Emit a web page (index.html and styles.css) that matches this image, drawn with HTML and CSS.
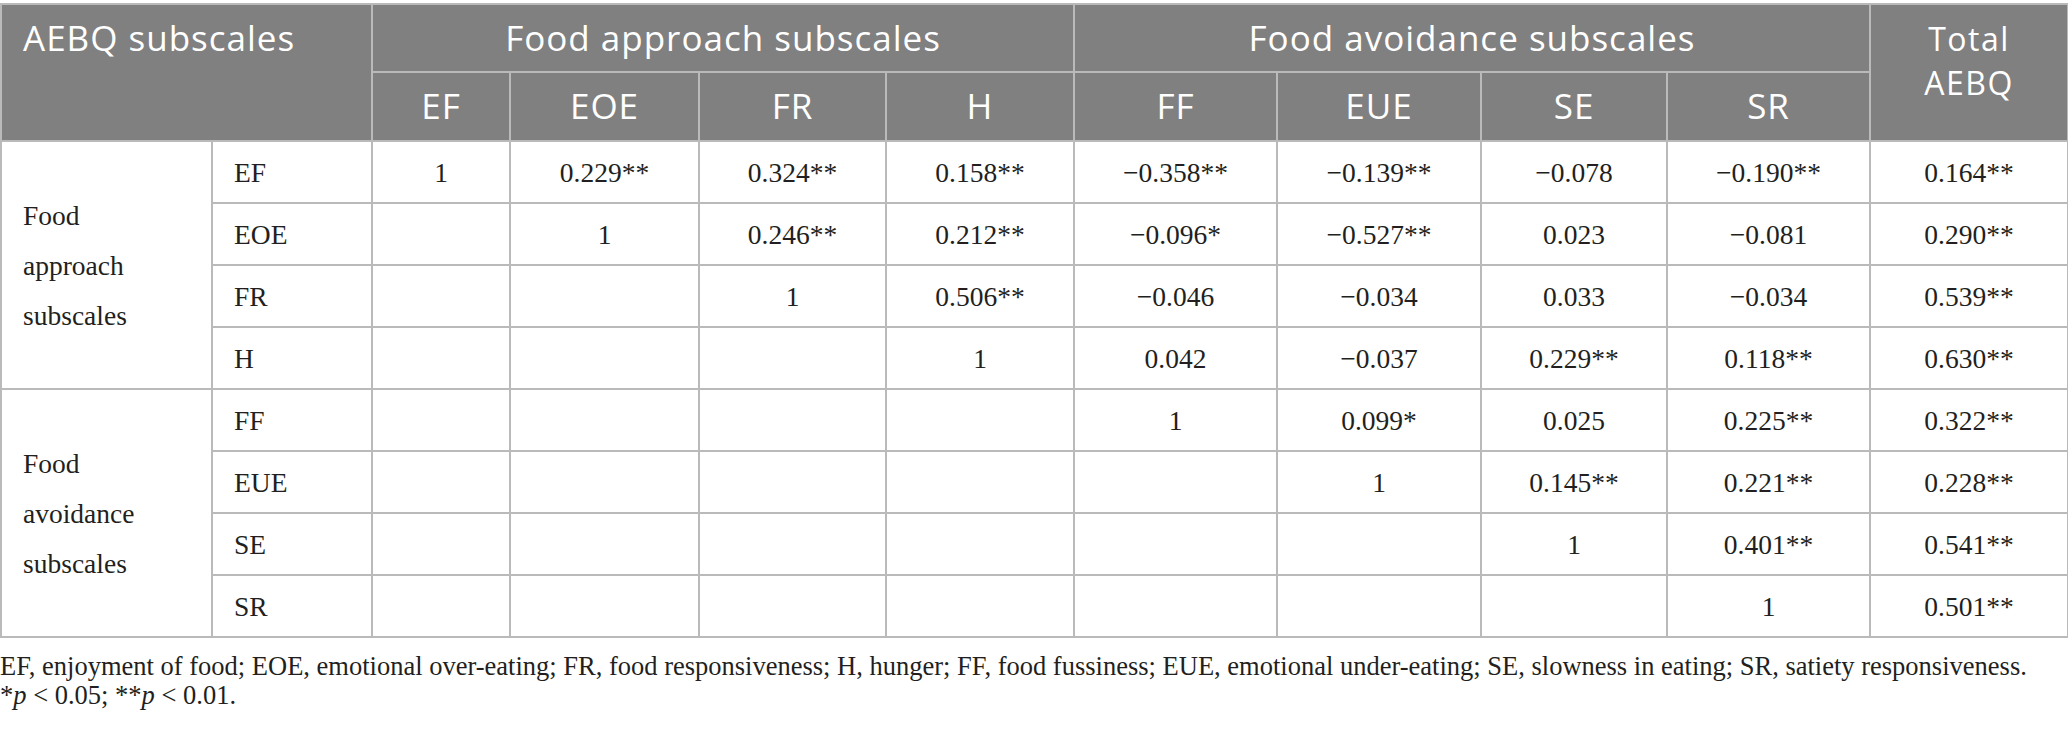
FILE: index.html
```html
<!DOCTYPE html>
<html lang="en">
<head>
<meta charset="utf-8">
<title>AEBQ subscales correlations</title>
<link rel="stylesheet" href="styles.css">
</head>
<body>
<div class="page">
<table class="corr">
  <colgroup>
    <col class="c-group"><col class="c-label">
    <col class="c-ef"><col class="c-eoe"><col class="c-fr"><col class="c-h">
    <col class="c-ff"><col class="c-eue"><col class="c-se"><col class="c-sr">
    <col class="c-total">
  </colgroup>
  <thead>
    <tr class="hr1">
      <th colspan="2" rowspan="2" class="left">AEBQ subscales</th>
      <th colspan="4">Food approach subscales</th>
      <th colspan="4">Food avoidance subscales</th>
      <th rowspan="2" class="total">Total<br>AEBQ</th>
    </tr>
    <tr class="hr2">
      <th>EF</th><th>EOE</th><th>FR</th><th>H</th>
      <th>FF</th><th>EUE</th><th>SE</th><th>SR</th>
    </tr>
  </thead>
  <tbody>
    <tr>
      <td rowspan="4" class="group">Food<br>approach<br>subscales</td>
      <td class="label">EF</td>
      <td>1</td><td>0.229**</td><td>0.324**</td><td>0.158**</td>
      <td>&minus;0.358**</td><td>&minus;0.139**</td><td>&minus;0.078</td><td>&minus;0.190**</td><td>0.164**</td>
    </tr>
    <tr>
      <td class="label">EOE</td>
      <td></td><td>1</td><td>0.246**</td><td>0.212**</td>
      <td>&minus;0.096*</td><td>&minus;0.527**</td><td>0.023</td><td>&minus;0.081</td><td>0.290**</td>
    </tr>
    <tr>
      <td class="label">FR</td>
      <td></td><td></td><td>1</td><td>0.506**</td>
      <td>&minus;0.046</td><td>&minus;0.034</td><td>0.033</td><td>&minus;0.034</td><td>0.539**</td>
    </tr>
    <tr>
      <td class="label">H</td>
      <td></td><td></td><td></td><td>1</td>
      <td>0.042</td><td>&minus;0.037</td><td>0.229**</td><td>0.118**</td><td>0.630**</td>
    </tr>
    <tr>
      <td rowspan="4" class="group">Food<br>avoidance<br>subscales</td>
      <td class="label">FF</td>
      <td></td><td></td><td></td><td></td>
      <td>1</td><td>0.099*</td><td>0.025</td><td>0.225**</td><td>0.322**</td>
    </tr>
    <tr>
      <td class="label">EUE</td>
      <td></td><td></td><td></td><td></td>
      <td></td><td>1</td><td>0.145**</td><td>0.221**</td><td>0.228**</td>
    </tr>
    <tr>
      <td class="label">SE</td>
      <td></td><td></td><td></td><td></td>
      <td></td><td></td><td>1</td><td>0.401**</td><td>0.541**</td>
    </tr>
    <tr>
      <td class="label">SR</td>
      <td></td><td></td><td></td><td></td>
      <td></td><td></td><td></td><td>1</td><td>0.501**</td>
    </tr>
  </tbody>
</table>
<div class="notes">
  <p>EF, enjoyment of food; EOE, emotional over-eating; FR, food responsiveness; H, hunger; FF, food fussiness; EUE, emotional under-eating; SE, slowness in eating; SR, satiety responsiveness.</p>
  <p>*<i>p</i> &lt; 0.05; **<i>p</i> &lt; 0.01.</p>
</div>
</div>
</body>
</html>
```

FILE: styles.css
```css
html, body {
  margin: 0;
  padding: 0;
  background: #ffffff;
}

.page {
  padding-top: 3px;
  width: 2068px;
}

.corr {
  border-collapse: collapse;
  table-layout: fixed;
  width: 2067px;
  font-family: "Liberation Serif", "Times New Roman", serif;
  font-size: 27.5px;
  color: #231f20;
}

.c-group { width: 211px; }
.c-label { width: 160px; }
.c-ef { width: 138px; }
.c-eoe { width: 189px; }
.c-fr { width: 187px; }
.c-h { width: 188px; }
.c-ff { width: 203px; }
.c-eue { width: 204px; }
.c-se { width: 186px; }
.c-sr { width: 203px; }
.c-total { width: 198px; }

.corr th,
.corr td {
  border: 2px solid #bababa;
  padding: 0;
}

.corr thead th {
  background: #808080;
  color: #ffffff;
  font-family: "Open Sans", "Liberation Sans", sans-serif;
  font-weight: 400;
  font-size: 35px;
  letter-spacing: 1px;
  line-height: 42px;
  text-align: center;
  vertical-align: top;
  padding-top: 12px;
}

.corr thead th.left {
  text-align: left;
  padding-left: 21px;
}

.corr thead th.total {
  font-size: 32px;
  letter-spacing: 1.5px;
  line-height: 44px;
}

.hr1 { height: 68px; }
.hr2 { height: 69px; }

.corr tbody tr { height: 62px; }

.corr tbody td {
  text-align: center;
  vertical-align: middle;
  line-height: 50px;
  padding-top: 2px;
}

.corr tbody td.label,
.corr tbody td.group {
  text-align: left;
  padding-left: 21px;
}

.notes {
  margin-top: 14px;
  font-family: "Liberation Serif", "Times New Roman", serif;
  font-size: 26.5px;
  line-height: 29px;
  color: #231f20;
}

.notes p {
  margin: 0;
}
```
